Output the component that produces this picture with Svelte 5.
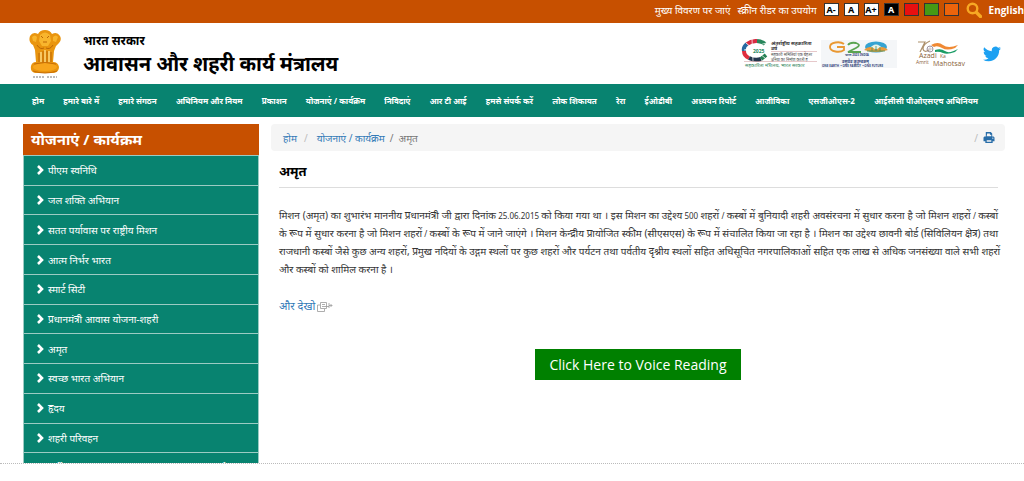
<script lang="ts">
  type Swatch = { name: string; color: string };

  const textSizes = [
    { label: "A-", title: "छोटा" },
    { label: "A", title: "सामान्य" },
    { label: "A+", title: "बड़ा" },
  ];

  const swatches: Swatch[] = [
    { name: "लाल", color: "#e81010" },
    { name: "हरा", color: "#469a14" },
    { name: "नारंगी", color: "#ec640c" },
  ];

  const navItems = [
    "होम",
    "हमारे बारे में",
    "हमारे संगठन",
    "अधिनियम और नियम",
    "प्रकाशन",
    "योजनाएं / कार्यक्रम",
    "निविदाएं",
    "आर टी आई",
    "हमसे संपर्क करें",
    "लोक शिकायत",
    "रेरा",
    "ईओडीबी",
    "अध्ययन रिपोर्ट",
    "आजीविका",
    "एसजीओएस-2",
    "आईसीसी पीओएसएच अधिनियम",
  ];

  const schemes = [
    "पीएम स्वनिधि",
    "जल शक्ति अभियान",
    "सतत पर्यावास पर राष्ट्रीय मिशन",
    "आत्म निर्भर भारत",
    "स्मार्ट सिटी",
    "प्रधानमंत्री आवास योजना-शहरी",
    "अमृत",
    "स्वच्छ भारत अभियान",
    "हृदय",
    "शहरी परिवहन",
    "पूर्वोत्तर क्षेत्र के लिए शहरी विकास एवं आवास कार्यक्रम",
  ];

  const missionLines = [
    "मिशन (अमृत) का शुभारंभ माननीय प्रधानमंत्री जी द्वारा दिनांक 25.06.2015 को किया गया था । इस मिशन का उद्देश्य 500 शहरों / कस्बों में बुनियादी शहरी अवसंरचना में सुधार करना है जो मिशन शहरों / कस्बों",
    "के रूप में सुधार करना है जो मिशन शहरों / कस्बों के रूप में जाने जाएंगे । मिशन केन्द्रीय प्रायोजित स्कीम (सीएसएस) के रूप में संचालित किया जा रहा है । मिशन का उद्देश्य छावनी बोर्ड (सिविलियन क्षेत्र) तथा",
    "राजधानी कस्बों जैसे कुछ अन्य शहरों, प्रमुख नदियों के उद्गम स्थलों पर कुछ शहरों और पर्यटन तथा पर्वतीय दृश्नीय स्थलों सहित अधिसूचित नगरपालिकाओं सहित एक लाख से अधिक जनसंख्या वाले सभी शहरों",
    "और कस्बों को शामिल करना है ।",
  ];

  // numerals sit below the size of the Devanagari text
  const splitNumbers = (line: string) => line.split(/( [\d.]+ | \/ )/);
</script>

<div class="topbar">
  <a href="#main">मुख्य विवरण पर जाएं</a>
  <a href="#reader">स्क्रीन रीडर का उपयोग</a>
  <div class="tools">
    {#each textSizes as size}
      <button type="button" class="tool" title={size.title}>{size.label}</button>
    {/each}
    <button type="button" class="tool tool--dark">A</button>
    {#each swatches as swatch}
      <button type="button" class="tool" aria-label={swatch.name} style:background={swatch.color}></button>
    {/each}
  </div>
  <button type="button" class="search" aria-label="खोज">
    <svg width="16" height="16" viewBox="0 0 16 16" fill="none" stroke="#f7a823">
      <circle cx="6.5" cy="6.5" r="4.8" stroke-width="2.4" />
      <path d="M10.5 10.5l4 4" stroke-width="3.4" stroke-linecap="round" />
    </svg>
  </button>
  <a href="#english" class="language">English</a>
</div>

<header class="masthead">
  <svg class="emblem" width="32" height="48" viewBox="0 0 32 48" aria-hidden="true">
    <path d="M9 4Q11 0 16 0t7 4q5-3 8 2 2 4-1 7l-3 3-2 5-1 11q5 0 6 5 0 5-5 6H6q-5-1-4-7 1-4 5-4L6 20l-2-5Q-1 12 1 6q3-5 8-2z" fill="#e9950f" />
    <path d="M11 5q5-5 10 0l1 6-3 5h-6l-3-5zM3 7q3-3 5 0l-1 5-3-1zM24 7q3-3 5 0l-2 5-3-1z" fill="#f8b52d" />
    <path d="M8 15q3 5 7 3M24 15q-3 5-7 3M12 6l2 2m6-2-2 2m-4 4h4M10 23v9m4-11v12m4-12v12m4-11v10" stroke="#bd6705" fill="none" />
    <path d="M12 22v10m4-12v13m4-12v11" stroke="#ffe28f" fill="none" stroke-width="1.3" />
    <ellipse cx="16" cy="37" rx="12" ry="4" fill="#f8a51c" />
    <path d="M4 41q12 4 24 0M5 34q11-3 22 0" stroke="#c86e06" fill="none" />
    <path d="M4 47h12m2 0h10" stroke="#777" stroke-dasharray="2 1" />
  </svg>
  <h1 class="title">
    <span class="title-small">भारत सरकार</span>
    <span class="title-large">आवासन और शहरी कार्य मंत्रालय</span>
  </h1>
  <div class="logos">
    <svg width="78" height="30" viewBox="0 0 78 30" role="img" aria-label="2025">
      <g fill="none" stroke-width="4">
        <path d="M24 5A12 9 0 0 0 16 2" stroke="#27865b" />
        <path d="M16 2A13 10 0 0 0 6 5" stroke="#d82c43" />
        <path d="M6 5Q2 8 3 12" stroke="#276aa1" />
        <path d="M3 12q0 5 5 7" stroke="#e02d3e" />
        <path d="M8 19q6 3 12 1" stroke="#24364c" />
        <path d="M20 20l5-4" stroke="#258054" />
        <path d="M5 4l19 15M3 11l22-7M11 0l1 22" stroke="#fff" stroke-width="1" opacity=".7" />
      </g>
      <text x="12" y="14" class="logo-year">2025</text>
      <text x="30" y="6" class="logo-bold">अंतर्राष्ट्रीय सहकारिता</text>
      <text x="30" y="11" class="logo-bold">वर्ष</text>
      <path d="M30 12.500h46" stroke="#d5a2a6" stroke-width=".6" />
      <text x="30" y="17" class="logo-tiny">सहकारी समितियां एक बेहतर</text>
      <text x="30" y="21.500" class="logo-tiny">दुनिया का निर्माण करती हैं</text>
      <path d="M3 22.500h73" stroke="#d5a2a6" stroke-width=".6" />
      <text x="4" y="28" class="logo-green">सहकारिता मंत्रालय, भारत सरकार</text>
    </svg>
    <svg width="76" height="28" viewBox="0 0 76 28" role="img" aria-label="G20">
      <path d="M0 0h76v28H0z" fill="#f4f6f8" />
      <g fill="none" stroke-width="1.800">
        <path d="M23 4C19 1 9 2 9 7s10 6 14 3V7h-7" stroke="#e99832" />
        <path d="M27 5q2-3 8-2 6 2 0 5l-8 4h13" stroke="#59a451" />
      </g>
      <ellipse cx="55" cy="7" rx="11" ry="5.500" fill="#35a3d2" />
      <path d="M48 9q7-9 14 0z" fill="#e8f2e9" />
      <path d="M43 10q6-6 12 0 6-6 12 0-12 4-24 0z" fill="#eb9b3c" />
      <path d="M46 11h18M51 7v4m4-5v5m4-4v4" stroke="#4d9358" stroke-width=".8" />
      <text x="24" y="16" class="logo-navy logo-motto">भारत 2023 INDIA</text>
      <text x="21" y="23" class="logo-navy">वसुधैव कुटुम्बकम्</text>
      <text x="1" y="27" class="logo-navy logo-motto">ONE EARTH &nbsp;• ONE FAMILY &nbsp;• ONE FUTURE</text>
    </svg>
    <svg width="54" height="28" viewBox="0 0 54 28" role="img" aria-label="Azadi Ka Amrit Mahotsav">
      <path d="M3 2h7L5 12M15 1q-7 3-7 8 1 4 6 1" stroke="#ad916d" stroke-width="1.200" fill="none" />
      <circle cx="15" cy="9" r="3" fill="none" stroke="#8d7f8b" stroke-width=".8" />
      <path d="M15 6v6m-3-3h6" stroke="#8d7f8b" stroke-width=".4" />
      <path d="M16 5q7-4 12 0t15 0l-3 3q-8 3-13 0t-8-1z" fill="#f08a34" />
      <path d="M20 10q6-2 10 1t13-2l-3 3q-8 3-12 1t-8-1z" fill="#1b9c65" />
      <text x="4" y="18" class="logo-azadi">Azadi</text>
      <text x="25" y="18" class="logo-azadi logo-ka">Ka</text>
      <text x="1" y="24" class="logo-azadi logo-ka">Amrit</text>
      <text x="18" y="26" class="logo-azadi">Mahotsav</text>
    </svg>
    <a href="#twitter" class="twitter" aria-label="Twitter">
      <svg width="18" height="16" viewBox="0 2 24 20" fill="#1da1f2">
        <path d="M23.950 4.570a10 10 0 0 1-2.820.770 4.960 4.960 0 0 0 2.160-2.720 9.900 9.900 0 0 1-3.120 1.190 4.920 4.920 0 0 0-8.390 4.480C7.690 8.100 4.070 6.130 1.640 3.160a4.930 4.930 0 0 0 1.520 6.570 4.900 4.900 0 0 1-2.230-.610v.060a4.920 4.920 0 0 0 3.950 4.830 5 5 0 0 1-2.210.080 4.940 4.940 0 0 0 4.600 3.420A9.870 9.870 0 0 1 0 19.540a13.990 13.990 0 0 0 7.550 2.210c9.050 0 14-7.500 14-13.980v-.640a9.940 9.940 0 0 0 2.400-2.560z" />
      </svg>
    </a>
  </div>
</header>

<nav class="navbar">
  {#each navItems as item}
    <a href="#nav">{item}</a>
  {/each}
</nav>

<div class="layout">
  <aside class="sidebar">
    <h2>योजनाएं / कार्यक्रम</h2>
    <ul>
      {#each schemes as scheme}
        <li>
          <a href="#scheme">
            <svg width="7" height="10" viewBox="0 0 7 10" fill="none" stroke="#fff" stroke-width="2.600" aria-hidden="true">
              <path d="M1 1l4 4-4 4" />
            </svg>
            {scheme}
          </a>
        </li>
      {/each}
    </ul>
  </aside>

  <main id="main">
    <div class="breadcrumb">
      <a href="#home">होम</a>
      <span class="slash slash--wide">/</span>
      <a href="#schemes">योजनाएं / कार्यक्रम</a>
      <span class="slash slash--dark">/</span>
      <span class="current">अमृत</span>
      <span class="slash slash--end">/</span>
      <button type="button" class="print" aria-label="प्रिंट">
        <svg width="12" height="11" viewBox="0 0 12 12">
          <path d="M3 0h5l1.500 1.500V5H11l1 1v4h-2v2H2v-2H0V6l1-1h1.500V0z" fill="#286da8" />
          <path d="M4 1.500h3V3h1.500v1.500H3.500zM3.500 9h5v1.500h-5z" fill="#f5f5f5" />
          <circle cx="10.200" cy="6.700" r=".6" fill="#fff" />
        </svg>
      </button>
    </div>

    <article>
      <h2>अमृत</h2>
      <p>
        {#each missionLines as line}
          <span class="line">
            {#each splitNumbers(line) as part, i}{#if i % 2}<span class="number">{part}</span>{:else}{part}{/if}{/each}
          </span>
        {/each}
      </p>
      <a href="#more" class="more">
        और देखो
        <svg width="16" height="10" viewBox="0 0 16 10" fill="none" stroke="#999" stroke-width=".8" aria-hidden="true">
          <path d="M3 3H.5v6.500h7V7M3.500.5h6v6h-6zM5 2.500h3m-3 2h7M12 1v5M12 3.500h3M13.500 2l1.500 1.500L13.500 5" />
        </svg>
      </a>
    </article>

    <button type="button" class="voice">Click Here to Voice Reading</button>
  </main>
</div>

<style>
  :global(body) {
    background: #fff;
    color: #333;
    font-family: "Noto Sans", "Noto Sans Devanagari", "Open Sans", sans-serif;
    font-size: 10px;
    overflow-x: hidden;
  }

  a {
    color: #337ab7;
    text-decoration: none;
  }

  button {
    font-family: inherit;
    padding: 0;
    border: 0;
    cursor: pointer;
  }

  .topbar {
    display: flex;
    align-items: center;
    justify-content: flex-end;
    height: 23px;
    padding-bottom: 4px;
    box-sizing: border-box;
    background: #c75000;
    gap: 7px;
    white-space: nowrap;
  }
  .topbar a {
    color: #fff;
    font-size: 10px;
  }
  .topbar .language {
    font-family: "Open Sans", sans-serif;
    font-weight: 700;
  }

  .tools {
    display: flex;
    gap: 5px;
  }
  .tool {
    width: 15px;
    height: 13px;
    border: 1px solid #333;
    background: #fff;
    color: #000;
    font-size: 9px;
    font-weight: 700;
    line-height: 11px;
  }
  .tool--dark {
    background: #000;
    color: #fff;
  }
  .search {
    height: 16px;
    background: none;
  }

  .masthead {
    display: flex;
    align-items: center;
    height: 61px;
    padding: 0 23px 0 29px;
    box-sizing: border-box;
  }
  .title {
    display: flex;
    flex-direction: column;
    margin: 0 0 0 22px;
    color: #000;
    white-space: nowrap;
  }
  .title-small {
    font-size: 12px;
    line-height: 20px;
  }
  .title-large {
    font-size: 20px;
    line-height: 26px;
  }
  .logos {
    display: flex;
    align-items: center;
    margin-left: auto;
    gap: 2px;
  }
  .logos svg {
    flex: none;
  }
  .logos svg:nth-child(3) {
    margin-left: 16px;
  }
  .twitter {
    display: flex;
    margin-left: 12px;
  }
  .logo-year {
    font-size: 5px;
    font-weight: 700;
    fill: #25865a;
  }
  .logo-bold {
    font-size: 5px;
    font-weight: 700;
    fill: #333;
  }
  .logo-tiny {
    font-size: 4px;
    fill: #444;
  }
  .logo-green {
    font-size: 5px;
    fill: #31865c;
  }
  .logo-navy {
    font-size: 4px;
    font-weight: 700;
    fill: #33457b;
  }
  .logo-motto {
    font-size: 3px;
  }
  .logo-azadi {
    font-family: "Open Sans", sans-serif;
    font-size: 7px;
    fill: #8a6238;
  }
  .logo-ka {
    font-size: 5px;
  }

  .navbar {
    display: flex;
    align-items: center;
    justify-content: space-between;
    height: 33px;
    padding: 0 46px 0 32px;
    background: #088370;
    white-space: nowrap;
  }
  .navbar a {
    color: #fff;
    font-size: 8px;
    font-weight: 700;
  }

  .layout {
    display: grid;
    grid-template-columns: 236px minmax(0, 1fr);
    gap: 12px;
    height: 347px;
    padding: 7px 19px 0 23px;
    box-sizing: border-box;
    overflow: hidden;
    border-bottom: 1px dotted #bbb;
  }

  .sidebar {
    min-height: 0;
  }
  .sidebar h2 {
    margin: 0;
    padding-left: 8px;
    background: #c75000;
    color: #fff;
    font-size: 15px;
    line-height: 31px;
  }
  .sidebar ul {
    display: grid;
    grid-auto-rows: 1fr;
    height: 327px;
    margin: 0;
    padding: 0;
    list-style: none;
  }
  .sidebar li {
    display: flex;
    border: 1px solid #9ccbc3;
    border-bottom: 0;
    background: #088370;
  }
  .sidebar li a {
    display: flex;
    align-items: center;
    gap: 4px;
    padding-left: 13px;
    color: #fff;
    line-height: 18px;
    white-space: nowrap;
  }

  .breadcrumb {
    display: flex;
    align-items: center;
    height: 27px;
    padding: 0 10px 0 12px;
    border-radius: 4px;
    background: #f5f5f5;
  }
  .slash {
    padding: 0 5px;
    color: #bbb;
  }
  .slash--wide {
    padding: 0 9px 0 7px;
  }
  .slash--dark,
  .current {
    color: #777;
  }
  .slash--end {
    margin-left: auto;
  }
  .print {
    display: flex;
    background: none;
  }

  article {
    padding: 0 7px 0 8px;
  }
  article h2 {
    margin: 0 0 18px;
    padding: 10px 0 6px;
    border-bottom: 1px solid #ddd;
    color: #000;
    font-size: 13px;
    line-height: 20px;
  }
  article p {
    margin: 0 0 19px;
    line-height: 18px;
  }
  .line {
    display: block;
    text-align: justify;
    text-align-last: justify;
    white-space: nowrap;
  }
  .line:last-child {
    text-align-last: left;
  }
  .number {
    font-size: 8px;
    line-height: 1;
  }
  .more {
    display: flex;
    align-items: center;
    gap: 2px;
    font-size: 11px;
    line-height: 18px;
  }
  .more svg {
    margin-top: 2px;
  }

  .voice {
    display: block;
    margin: 34px auto 0;
    padding: 0 14px;
    background: #008000;
    color: #fff;
    font-family: "Open Sans", sans-serif;
    font-size: 14px;
    line-height: 31px;
  }
</style>
